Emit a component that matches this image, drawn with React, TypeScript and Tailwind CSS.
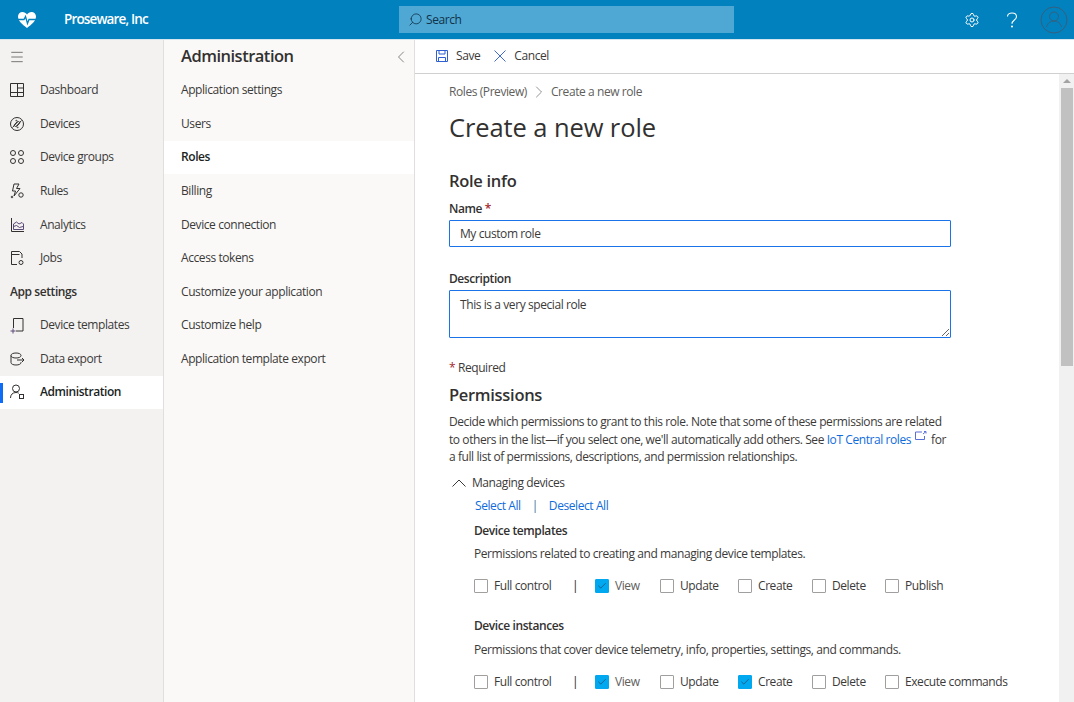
// Create a new role page: app header, two side navs and the scrolling form.
import { Check, ChevronLeft, ChevronRight, Menu, Search, Settings } from 'lucide-react';
import type { ReactNode } from 'react';

const FONT = "font-['Open_Sans','Noto_Sans',sans-serif]";

function Ico({ children }: { children: ReactNode }) {
    return (
        <svg width="18" height="18" viewBox="0 0 18 18" fill="none" stroke="#323130" strokeWidth="1" className="shrink-0">
            {children}
        </svg>
    );
}

const NAV_TOP: { label: string; icon: ReactNode }[] = [
    {
        label: 'Dashboard',
        icon: (
            <Ico>
                <path d="M2.500 2.500h13v13h-13zM9.500 2.500v13M2.500 11.500h13M9.500 7h6" />
            </Ico>
        ),
    },
    {
        label: 'Devices',
        icon: (
            <Ico>
                <circle cx="9" cy="9" r="6.500" />
                <path d="M4.500 12.500 9.500 7c1.200-1.200 3 .2 2 1.600L9 11c-1 1.200.5 2.300 1.500 1.300M13.500 5.500 8.500 11c-1.200 1.200-3-.2-2-1.600L9 7c1-1.200-.5-2.300-1.500-1.300" />
            </Ico>
        ),
    },
    {
        label: 'Device groups',
        icon: (
            <Ico>
                <circle cx="5" cy="5" r="2.500" />
                <circle cx="13" cy="5" r="2.500" />
                <circle cx="5" cy="13" r="2.500" />
                <circle cx="13" cy="13" r="2.500" />
            </Ico>
        ),
    },
    {
        label: 'Rules',
        icon: (
            <Ico>
                <path d="M6 2h5L8.500 6.500H12L6 14l1.500-5H4.500z" />
                <circle cx="13" cy="13" r="2.200" />
                <circle cx="4" cy="15" r="0.800" />
            </Ico>
        ),
    },
    {
        label: 'Analytics',
        icon: (
            <Ico>
                <path d="M3.500 2v13.500H16" />
                <path d="M5.500 13.500V8l3-2 2.500 2 3-1.500 1.500 1.500v5.500zM5.500 10.500l3-1 3 2 3.500-1" stroke="#5c4a78" />
            </Ico>
        ),
    },
    {
        label: 'Jobs',
        icon: (
            <Ico>
                <path d="M9 15.500H3.500v-13h8l2.500 2.500v4M3.500 5.500h8" />
                <circle cx="13" cy="13.500" r="2" />
            </Ico>
        ),
    },
];

const NAV_BOTTOM: { label: string; active?: boolean; icon: ReactNode }[] = [
    {
        label: 'Device templates',
        icon: (
            <Ico>
                <path d="M5.500 12V2.500h9.500v12.500H8" />
                <path d="M2.500 15h5M5 12.500v5" stroke="#5c4a78" />
            </Ico>
        ),
    },
    {
        label: 'Data export',
        icon: (
            <Ico>
                <path d="M13 5.500c0-1.700-2.300-2.500-5-2.500S3 3.800 3 5.500v7C3 14.200 5.300 15 8 15s5-.8 5-2.500V12M3 5.500C3 7.200 5.300 8 8 8s5-.8 5-2.500M9 10h7M14 8l2 2-2 2" />
            </Ico>
        ),
    },
    {
        label: 'Administration',
        active: true,
        icon: (
            <Ico>
                <circle cx="8" cy="5.500" r="3.500" />
                <path d="M2.500 15c0-3.200 2-5.500 5.500-5.500 1 0 2 .2 2.800.7" />
                <rect x="11.500" y="11.500" width="4" height="4" />
            </Ico>
        ),
    },
];

const ADMIN_ITEMS = [
    'Application settings',
    'Users',
    'Roles',
    'Billing',
    'Device connection',
    'Access tokens',
    'Customize your application',
    'Customize help',
    'Application template export',
];

function NavRow({ label, icon, active }: { label: string; icon: ReactNode; active?: boolean }) {
    return (
        <div className={`relative flex h-[33.55px] items-center gap-[14px] pl-[8px] ${active ? 'bg-white font-semibold text-[#201f1e]' : 'text-[#3b3a39]'}`}>
            {active && <span className="absolute left-0 top-[7px] h-[20px] w-[3px] bg-[#0f6cf5]" />}
            {icon}
            <span>{label}</span>
        </div>
    );
}

function Box({ label, checked, dim }: { label: string; checked?: boolean; dim?: boolean }) {
    return (
        <div className="flex items-center gap-[6px] whitespace-nowrap">
            <span className={`flex size-[14px] items-center justify-center rounded-[1px] border ${checked ? 'border-[#00a8f0] bg-[#00a8f0]' : 'border-[#a19f9d] bg-white'}`}>
                {checked && <Check size={10} strokeWidth={1.5} className="text-[#1b3a55]" />}
            </span>
            <span className={dim ? 'text-[#605e5c]' : 'text-[#3b3a39]'}>{label}</span>
        </div>
    );
}

function PermissionRow({ last, createChecked }: { last: string; createChecked?: boolean }) {
    return (
        <div className="grid grid-cols-[99px_22px_65px_78px_74px_73px_auto] items-center">
            <Box label="Full control" />
            <span className="-ml-[1px] text-[#201f1e]">|</span>
            <Box label="View" checked dim />
            <Box label="Update" />
            <Box label="Create" checked={createChecked} />
            <Box label="Delete" />
            <Box label={last} />
        </div>
    );
}

export default function App() {
    return (
        <div className={`${FONT} flex h-[702px] w-[1074px] flex-col overflow-hidden bg-white text-[12px] tracking-[-0.42px] text-[#3b3a39]`}>
            <header className="flex h-[40px] shrink-0 items-center border-b border-[#d5e6f0] bg-[#0281bf] text-white">
                <svg width="20" height="18" viewBox="0 0 20 18" className="ml-[17px]">
                    <path d="M10 17C5 13 1 10 1 5.500 1 2.800 3 1 5.500 1 7.300 1 9 2 10 3.500 11 2 12.700 1 14.500 1 17 1 19 2.800 19 5.500 19 10 15 13 10 17z" fill="white" />
                    <path d="M1 8.500h6l1.500-3 2 7 1.500-4h7" fill="none" stroke="#0281bf" strokeWidth="1.300" />
                </svg>
                <span className="ml-[27px] w-[335px] text-[13.500px] font-semibold tracking-[-0.85px]">Proseware, Inc</span>
                <div className="flex h-[27px] w-[335px] items-center gap-[3px] bg-[#4fa8d3] pl-[9px] text-[#10324a]">
                    <Search size={15} strokeWidth={1.300} className="-scale-x-100" />
                    <span>Search</span>
                </div>
                <Settings size={16} strokeWidth={1.500} className="ml-[230px]" />
                <span className="ml-[24px] flex w-[16px] justify-center">
                    <svg width="12" height="16" viewBox="0 0 12 16" fill="none" stroke="white" strokeWidth="1.100">
                        <path d="M1.500 4.500C1.500 2.500 3.500 1 6 1s4.500 1.500 4.500 3.700c0 3.300-4.500 3.300-4.500 7" />
                        <circle cx="6" cy="14.500" r="0.500" />
                    </svg>
                </span>
                <span className="ml-[20px]">
                    <svg width="28" height="28" viewBox="0 0 28 28" fill="none" stroke="#35607e" strokeWidth="1">
                        <circle cx="14" cy="14" r="13" />
                        <circle cx="14" cy="10.500" r="4.500" />
                        <path d="M6.500 21c1-4 4-6 7.500-6s6.500 2 7.500 6" />
                    </svg>
                </span>
            </header>

            <div className="flex min-h-0 flex-1">
                <nav className="w-[164px] shrink-0 border-r border-[#e1dfdd] bg-[#f3f2f1]">
                    <div className="flex h-[33.6px] items-center pl-[9px]">
                        <Menu size={16} strokeWidth={1} className="text-[#3b3a39]" />
                    </div>
                    {NAV_TOP.map((item) => (
                        <NavRow key={item.label} {...item} />
                    ))}
                    <div className="flex h-[33.55px] items-center pl-[10px] font-semibold text-[#323130]">App settings</div>
                    {NAV_BOTTOM.map((item) => (
                        <NavRow key={item.label} {...item} />
                    ))}
                </nav>

                <aside className="w-[251px] shrink-0 border-r border-[#e1dfdd] bg-[#faf9f8]">
                    <div className="flex h-[33.6px] items-center justify-between pl-[17px] pr-[3px]">
                        <h2 className="text-[16.500px] font-semibold tracking-[-0.5px] text-[#323130]">Administration</h2>
                        <ChevronLeft size={20} strokeWidth={0.9} className="text-[#605e5c]" />
                    </div>
                    {ADMIN_ITEMS.map((item) => (
                        <div key={item} className={`flex h-[33.55px] items-center pl-[17px] ${item === 'Roles' ? 'bg-white font-semibold text-[#201f1e]' : ''}`}>
                            {item}
                        </div>
                    ))}
                </aside>

                <main className="flex min-w-0 flex-1 flex-col">
                    <div className="flex h-[34px] shrink-0 items-center border-b border-[#d2d0ce] pb-[1px] pl-[20px]">
                        <svg width="14" height="14" viewBox="0 0 14 14" fill="none" stroke="#2f5fd0" strokeWidth="1">
                            <path d="M1.500 1.500h11v11h-11zM4 1.500v3.500h6V1.500M3.500 12.500V8.500h7v4" />
                        </svg>
                        <span className="ml-[7px]">Save</span>
                        <svg width="12" height="12" viewBox="0 0 12 12" fill="none" stroke="#3f68d8" strokeWidth="1" className="ml-[14px]">
                            <path d="M.5.500l11 11M11.500.500l-11 11" />
                        </svg>
                        <span className="ml-[8px]">Cancel</span>
                    </div>

                    <div className="flex min-h-0 flex-1">
                        <div className="min-w-0 flex-1 overflow-hidden pl-[34px]">
                            <div className="flex h-[36px] items-center text-[#605e5c]">
                                <span>Roles (Preview)</span>
                                <ChevronRight size={20} strokeWidth={0.8} className="mx-[2px]" />
                                <span>Create a new role</span>
                            </div>
                            <h1 className="text-[25.500px] leading-[34px] tracking-[-0.1px] text-[#323130]">Create a new role</h1>

                            <h3 className="mt-[25px] text-[16.500px] font-semibold leading-[24px] tracking-[-0.3px] text-[#323130]">Role info</h3>
                            <div className="mt-[6px] font-semibold leading-[20px] text-[#323130]">
                                Name <span className="text-[#a4262c]">*</span>
                            </div>
                            <input
                                readOnly
                                value="My custom role"
                                className="mt-[1px] block h-[27px] w-[502px] rounded-[1px] border border-[#1a73e8] px-[10px] outline-none"
                            />
                            <div className="mt-[22px] font-semibold leading-[20px] text-[#323130]">Description</div>
                            <textarea
                                readOnly
                                value="This is a very special role"
                                className="mt-[1px] block h-[48px] w-[502px] resize-y rounded-[1px] border border-[#1a73e8] px-[10px] py-[5px] outline-none"
                            />
                            <div className="mt-[21px] leading-[18px]">
                                <span className="text-[#a4262c]">*</span> Required
                            </div>

                            <h3 className="mt-[6px] text-[16.500px] font-semibold leading-[24px] tracking-[-0.3px] text-[#323130]">Permissions</h3>
                            <p className="mt-[6px] w-[502px] leading-[17.500px]">
                                Decide which permissions to grant to this role. Note that some of these permissions are related to others in the list—if you select one, we'll automatically add others. See{' '}
                                <a className="text-[#0f6cdc]">IoT Central roles</a>
                                <svg width="12" height="10" viewBox="0 0 12 10" fill="none" stroke="#5a6fd8" strokeWidth="1" className="mx-[4px] inline-block align-[3px]">
                                    <path d="M7 1H.5v7.500h9V5M8 3l3-2.500M9 .5h2v2" />
                                </svg>
                                for a full list of permissions, descriptions, and permission relationships.
                            </p>

                            <div className="mt-[7px] flex h-[20px] items-center gap-[6px] pl-[3px]">
                                <svg width="14" height="8" viewBox="0 0 14 8" fill="none" stroke="#3b3a39" strokeWidth="1">
                                    <path d="M.5 7.500 7 1l6.500 6.500" />
                                </svg>
                                <span>Managing devices</span>
                            </div>
                            <div className="ml-[26px] mt-[3px] flex h-[20px] items-center text-[#0f6cdc]">
                                <span>Select All</span>
                                <span className="mx-[11px] text-[#3b6ea5]">|</span>
                                <span>Deselect All</span>
                            </div>

                            <div className="ml-[25px]">
                                <div className="mt-[5px] font-semibold leading-[20px] text-[#323130]">Device templates</div>
                                <div className="mt-[3px] leading-[20px]">Permissions related to creating and managing device templates.</div>
                                <div className="mt-[13px] h-[20px]">
                                    <PermissionRow last="Publish" />
                                </div>
                                <div className="mt-[19px] font-semibold leading-[20px] text-[#323130]">Device instances</div>
                                <div className="mt-[4px] leading-[20px]">Permissions that cover device telemetry, info, properties, settings, and commands.</div>
                                <div className="mt-[13px] h-[20px]">
                                    <PermissionRow last="Execute commands" createChecked />
                                </div>
                            </div>
                        </div>

                        <div className="flex w-[15px] shrink-0 flex-col items-center bg-[#f1f1f1]">
                            <div className="mt-[5px] size-0 border-x-[4px] border-b-[4px] border-x-transparent border-b-[#a3a3a3]" />
                            <div className="mt-[5px] h-[278px] w-[12px] bg-[#c1c1c1]" />
                        </div>
                    </div>
                </main>
            </div>
        </div>
    );
}
